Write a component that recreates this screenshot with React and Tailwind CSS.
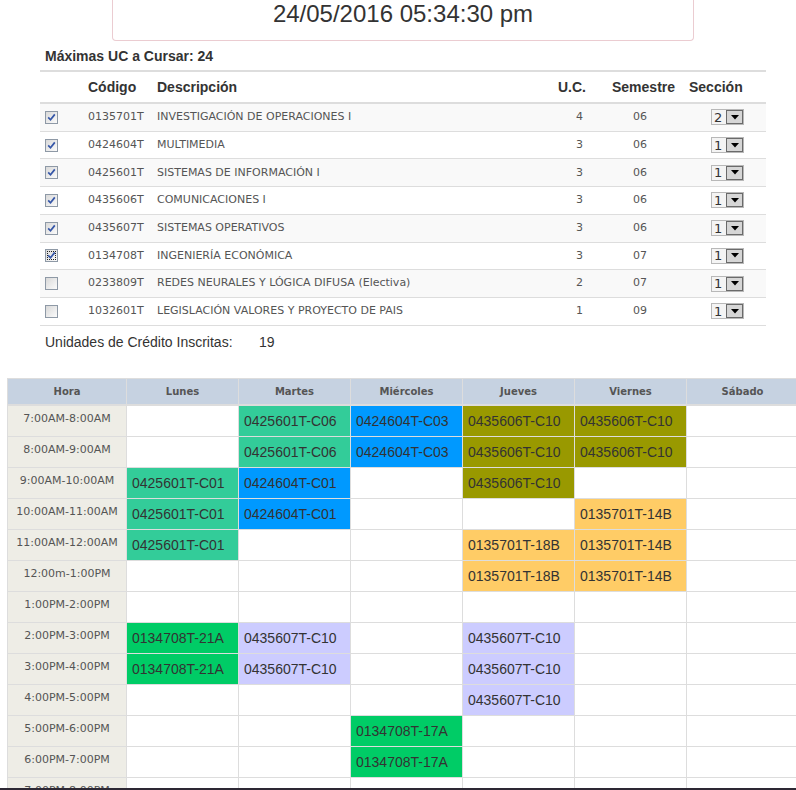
import React from 'react';

const courses = [
  { code: '0135701T', name: 'INVESTIGACIÓN DE OPERACIONES I', uc: 4, sem: '06', sec: 2, checked: true },
  { code: '0424604T', name: 'MULTIMEDIA', uc: 3, sem: '06', sec: 1, checked: true },
  { code: '0425601T', name: 'SISTEMAS DE INFORMACIÓN I', uc: 3, sem: '06', sec: 1, checked: true },
  { code: '0435606T', name: 'COMUNICACIONES I', uc: 3, sem: '06', sec: 1, checked: true },
  { code: '0435607T', name: 'SISTEMAS OPERATIVOS', uc: 3, sem: '06', sec: 1, checked: true },
  { code: '0134708T', name: 'INGENIERÍA ECONÓMICA', uc: 3, sem: '07', sec: 1, checked: true, focus: true },
  { code: '0233809T', name: 'REDES NEURALES Y LÓGICA DIFUSA (Electiva)', uc: 2, sem: '07', sec: 1, checked: false },
  { code: '1032601T', name: 'LEGISLACIÓN VALORES Y PROYECTO DE PAIS', uc: 1, sem: '09', sec: 1, checked: false },
];

const days = ['Lunes', 'Martes', 'Miércoles', 'Jueves', 'Viernes', 'Sábado'];

const colors = {
  teal: 'bg-[#33cc99]',
  blue: 'bg-[#0099ff]',
  olive: 'bg-[#999900]',
  orange: 'bg-[#ffcc66]',
  green: 'bg-[#00cc66]',
  lilac: 'bg-[#ccccff]',
};

const A = ['0425601T-C06', 'teal'];
const B = ['0424604T-C03', 'blue'];
const C = ['0435606T-C10', 'olive'];
const D = ['0425601T-C01', 'teal'];
const E = ['0424604T-C01', 'blue'];
const F = ['0135701T-14B', 'orange'];
const G = ['0135701T-18B', 'orange'];
const H = ['0134708T-21A', 'green'];
const I = ['0435607T-C10', 'lilac'];
const J = ['0134708T-17A', 'green'];

// one entry per hour, cells Lunes..Sábado
const schedule = [
  ['7:00AM-8:00AM', [null, A, B, C, C, null]],
  ['8:00AM-9:00AM', [null, A, B, C, C, null]],
  ['9:00AM-10:00AM', [D, E, null, C, null, null]],
  ['10:00AM-11:00AM', [D, E, null, null, F, null]],
  ['11:00AM-12:00AM', [D, null, null, G, F, null]],
  ['12:00m-1:00PM', [null, null, null, G, F, null]],
  ['1:00PM-2:00PM', [null, null, null, null, null, null]],
  ['2:00PM-3:00PM', [H, I, null, I, null, null]],
  ['3:00PM-4:00PM', [H, I, null, I, null, null]],
  ['4:00PM-5:00PM', [null, null, null, I, null, null]],
  ['5:00PM-6:00PM', [null, null, J, null, null, null]],
  ['6:00PM-7:00PM', [null, null, J, null, null, null]],
  ['7:00PM-8:00PM', [null, null, null, null, null, null]],
];

const Check = ({ checked, focus }) => (
  <span
    className={`flex h-[13px] w-[13px] items-center justify-center border border-[#8e99a6] bg-gradient-to-br from-[#d9d9d9] to-[#fbfbfb] ${
      focus ? 'outline outline-1 outline-dotted outline-[#222] outline-offset-[-3px]' : ''
    }`}
  >
    {checked && (
      <svg width="9" height="9" viewBox="0 0 9 9">
        <path d="M1.2 4.4 L3.5 6.8 L7.8 1.4" fill="none" stroke="#3556a8" strokeWidth="1.7" />
      </svg>
    )}
  </span>
);

const Select = ({ value }) => (
  <div className="flex h-[16px] w-[33px] items-center border border-[#b8b8b8] bg-[#f4f4f4]">
    <span className="pl-[2px] text-[13px] leading-none text-[#333]">{value}</span>
    <span className="ml-auto flex h-[14px] w-[17px] items-center justify-center border border-[#6a6a6a] bg-[#d6d6d6]">
      <svg width="8" height="5" viewBox="0 0 8 5">
        <path d="M0 0 H8 L4 4.5 Z" fill="#000" />
      </svg>
    </span>
  </div>
);

export default function App() {
  return (
    <div className="flex h-[790px] flex-col overflow-hidden bg-white font-['Liberation_Sans',Arial,sans-serif] text-[#333]">
      {/* clock */}
      <div className="ml-[112px] h-[41px] w-[582px] shrink-0 rounded-b-[4px] border-x border-b border-[#ebccd1] text-center text-[24px] leading-[28px]">
        24/05/2016 05:34:30 pm
      </div>

      <div className="ml-[45px] mt-[5px] shrink-0 text-[14px] font-bold leading-[20px]">Máximas UC a Cursar: 24</div>

      {/* courses */}
      <div className="ml-[40px] mt-[4px] w-[726px] shrink-0">
        <div className="grid h-[34px] grid-cols-[48px_69px_401px_54px_77px_77px] items-center border-y-2 border-[#dddddd] text-[14px] font-bold">
          <span />
          <span>Código</span>
          <span>Descripción</span>
          <span>U.C.</span>
          <span>Semestre</span>
          <span>Sección</span>
        </div>
        {courses.map((c, i) => (
          <div
            key={c.code}
            className={`grid h-[27.71px] grid-cols-[48px_69px_401px_54px_77px_77px] items-center border-b border-[#dddddd] font-['DejaVu_Sans',Verdana,sans-serif] text-[11px] text-[#555] ${
              i % 2 === 0 ? 'bg-[#f9f9f9]' : 'bg-white'
            }`}
          >
            <span className="pl-[5px]">
              <Check checked={c.checked} focus={c.focus} />
            </span>
            <span>{c.code}</span>
            <span className="whitespace-nowrap">{c.name}</span>
            <span className="pl-[18px]">{c.uc}</span>
            <span className="pl-[21px]">{c.sem}</span>
            <span className="pl-[22px]">
              <Select value={c.sec} />
            </span>
          </div>
        ))}
      </div>

      <div className="ml-[45px] mt-[6px] flex shrink-0 text-[14px] leading-[20px]">
        <span className="w-[214px]">Unidades de Crédito Inscritas:</span>
        <span>19</span>
      </div>

      {/* schedule */}
      <div className="mt-[26px] min-h-0 flex-1 overflow-hidden pl-[7px]">
        <div className="w-[792px] bg-[#dddddd] p-px font-['DejaVu_Sans',Verdana,sans-serif]">
          <div className="grid h-[25px] grid-cols-[118px_repeat(6,111px)] gap-px">
            {['Hora', ...days].map(d => (
              <div key={d} className="flex items-center justify-center bg-[#c6d2e1] text-[10px] font-bold text-[#555]">
                {d}
              </div>
            ))}
          </div>
          <div className="mt-[2px] grid grid-cols-[118px_repeat(6,111px)] gap-px">
            {schedule.map(([hour, cells]) => (
              <React.Fragment key={hour}>
                <div className="h-[30px] bg-[#eeede6] pt-[6px] text-center text-[11px] leading-[13px] text-[#555]">{hour}</div>
                {cells.map((cell, j) =>
                  cell ? (
                    <div
                      key={j}
                      className={`flex h-[30px] items-center pl-[5px] pt-px font-['Liberation_Sans',Arial,sans-serif] text-[14px] text-[#333] ${colors[cell[1]]}`}
                    >
                      {cell[0]}
                    </div>
                  ) : (
                    <div key={j} className="h-[30px] bg-white" />
                  )
                )}
              </React.Fragment>
            ))}
          </div>
        </div>
      </div>

      <div className="h-[2px] shrink-0 bg-[#2d2834]" />
    </div>
  );
}
